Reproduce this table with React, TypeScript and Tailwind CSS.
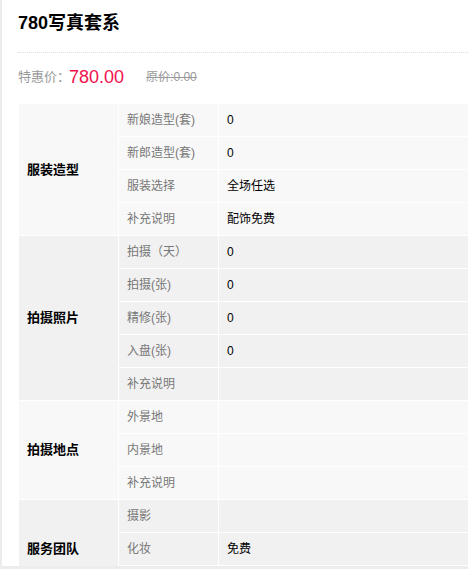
type Row = { label: string; value?: string }
type Group = { name: string; tone: 'light' | 'dark'; rows: Row[] }

const groups: Group[] = [
  {
    name: '服装造型',
    tone: 'light',
    rows: [
      { label: '新娘造型(套)', value: '0' },
      { label: '新郎造型(套)', value: '0' },
      { label: '服装选择', value: '全场任选' },
      { label: '补充说明', value: '配饰免费' },
    ],
  },
  {
    name: '拍摄照片',
    tone: 'dark',
    rows: [
      { label: '拍摄（天）', value: '0' },
      { label: '拍摄(张)', value: '0' },
      { label: '精修(张)', value: '0' },
      { label: '入盘(张)', value: '0' },
      { label: '补充说明' },
    ],
  },
  {
    name: '拍摄地点',
    tone: 'light',
    rows: [{ label: '外景地' }, { label: '内景地' }, { label: '补充说明' }],
  },
  {
    name: '服务团队',
    tone: 'dark',
    // last row is below the fold in the screenshot
    rows: [{ label: '摄影' }, { label: '化妆', value: '免费' }, { label: '' }],
  },
]

const font = { fontFamily: '"Liberation Sans", "Noto Sans CJK SC", sans-serif' }

export default function App() {
  return (
    <div className="w-[468px] h-[569px] overflow-hidden bg-white flex flex-col" style={font}>
      <div className="flex-1 min-h-0 overflow-hidden border-l-2 border-[#ececec] pl-[16px]">
        <h1 className="pt-[11px] h-[35px] text-[18px] leading-[24px] font-bold text-black">780写真套系</h1>
        <div className="mt-[17px] border-b border-dotted border-[#dddddd]" />
        <div className="mt-[12px] h-[24px] flex items-center">
          <span className="text-[13px] text-[#999999]">特惠价：</span>
          <span className="text-[18px] text-[#f0104c] -ml-[1px]">780.00</span>
          <span className="ml-[22px] text-[12px] text-[#999999] line-through">原价:0.00</span>
        </div>
        <table className="mt-[14px] w-[460px] border-collapse table-fixed">
          <colgroup>
            <col className="w-[100px]" />
            <col className="w-[100px]" />
            <col />
          </colgroup>
          <tbody>
            {groups.map((g) =>
              g.rows.map((r, i) => {
                const bg = g.tone === 'light' ? 'bg-[#f8f8f8]' : 'bg-[#f1f1f1]'
                return (
                  <tr key={`${g.name}-${i}`} className="h-[33px]">
                    {i === 0 ? (
                      <td
                        rowSpan={g.rows.length}
                        className={`${bg} border border-white pl-[8px] text-[13px] font-bold text-black align-middle`}
                      >
                        {g.name}
                      </td>
                    ) : null}
                    <td className={`${bg} border border-white pl-[8px] text-[12px] text-[#777777]`}>{r.label}</td>
                    <td className={`${bg} border border-white pl-[8px] text-[12px] text-black`}>{r.value ?? ''}</td>
                  </tr>
                )
              })
            )}
          </tbody>
        </table>
      </div>
      <div className="h-[3px] bg-[#ececec]" />
    </div>
  )
}
